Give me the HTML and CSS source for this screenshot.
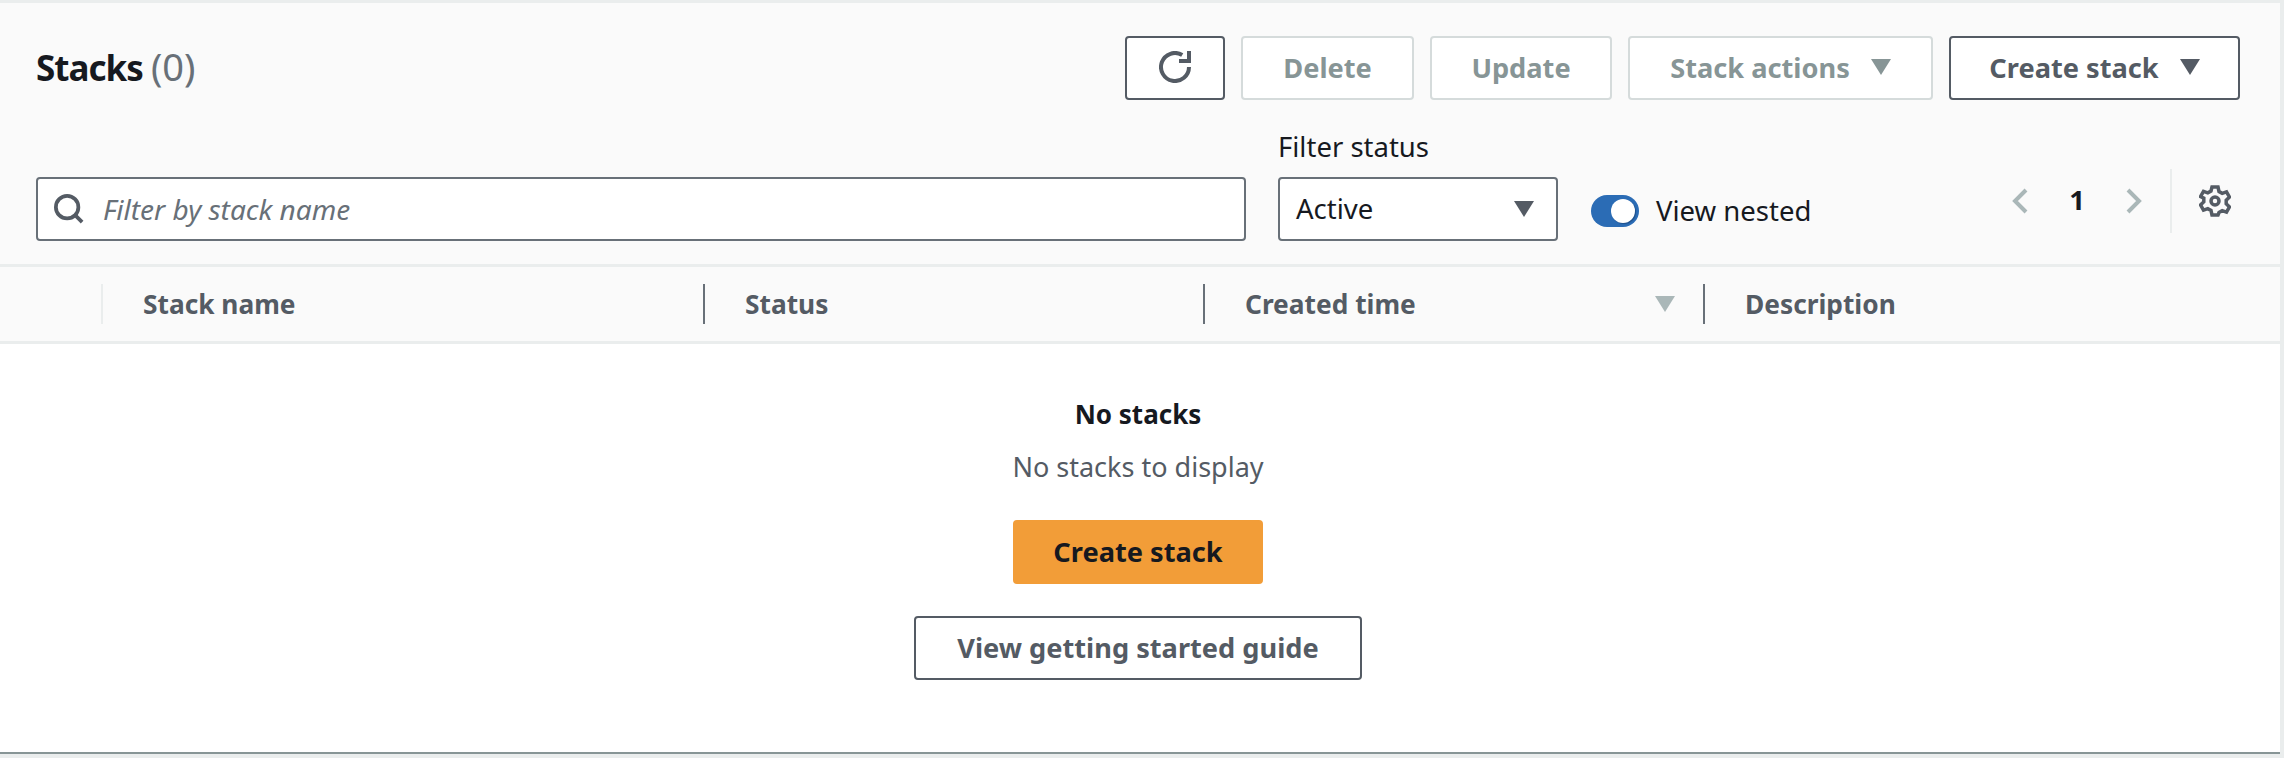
FILE: index.html
```html
<!DOCTYPE html>
<html lang="en">
<head>
    <meta charset="UTF-8">
    <title>Stacks</title>
    <link rel="stylesheet" href="styles.css">
</head>
<body>

    <div class="panel">
        <div class="panel-header">
            <div class="title-row">
                <h2 class="title">Stacks <span class="count">(0)</span></h2>
                <div class="actions">
                    <button class="btn btn-icon" aria-label="Refresh">
                        <svg class="icon" viewBox="0 0 16 16"><path d="M15 8a7 7 0 1 1-3.38-5.99"/><path d="M10 5h5V0"/></svg>
                    </button>
                    <button class="btn btn-disabled btn-delete">Delete</button>
                    <button class="btn btn-disabled btn-update">Update</button>
                    <button class="btn btn-disabled btn-menu btn-stack-actions">Stack actions <span class="caret caret-muted"></span></button>
                    <button class="btn btn-menu btn-create">Create stack <span class="caret"></span></button>
                </div>
            </div>

            <div class="filter-row">
                <div class="search">
                    <svg class="icon search-icon" viewBox="0 0 16 16"><circle cx="7" cy="7" r="6"/><path d="M11 11l4 4"/></svg>
                    <span class="placeholder">Filter by stack name</span>
                </div>
                <div class="status-filter">
                    <label class="filter-label">Filter status</label>
                    <div class="select"><span class="select-value">Active</span> <span class="caret"></span></div>
                </div>
                <div class="toggle-wrap">
                    <span class="toggle"><span class="toggle-thumb"></span></span>
                    <span class="toggle-label">View nested</span>
                </div>
                <div class="pager">
                    <svg class="chevron" viewBox="0 0 16 26"><path d="M14 2L3 13l11 11"/></svg>
                    <span class="page-num">1</span>
                    <svg class="chevron" viewBox="0 0 16 26"><path d="M2 2l11 11L2 24"/></svg>
                    <span class="pager-divider"></span>
                    <svg class="icon gear" viewBox="0 0 32 32"><path d="M13 2h6l1 4.5 3.2 1.800 4.300-1.400 3 5.200-3.300 3.100v3.600l3.300 3.100-3 5.200-4.300-1.400-3.200 1.800L19 30h-6l-1-4.500-3.200-1.800-4.300 1.400-3-5.200 3.300-3.100v-3.600L1.500 11.600l3-5.200 4.300 1.400L12 6z"/><circle cx="16" cy="16" r="4"/></svg>
                </div>
            </div>
        </div>

        <div class="table-head">
            <div class="th th-select"></div>
            <div class="th th-first">Stack name</div>
            <div class="th">Status</div>
            <div class="th th-sorted">Created time <span class="caret caret-sort"></span></div>
            <div class="th">Description</div>
        </div>

        <div class="empty">
            <div class="empty-title">No stacks</div>
            <div class="empty-text">No stacks to display</div>
            <button class="btn btn-primary">Create stack</button>
            <button class="btn btn-guide">View getting started guide</button>
        </div>
    </div>

</body>
</html>
```

FILE: styles.css
```css
* {
    box-sizing: border-box;
}

html, body {
    height: 100%;
}

body {
    margin: 0;
    background-color: #eaeded;
    font-family: "Noto Sans", Arial, sans-serif;
    font-size: 27.5px;
    color: #16191f;
    overflow: hidden;
}

.panel {
    margin-top: 3px;
    width: 2280px;
    height: 751px;
    background-color: #ffffff;
    border-bottom: 2px solid #879596;
    display: flex;
    flex-direction: column;
}

.panel-header {
    height: 264px;
    padding: 33px 40px 0 36px;
    background-color: #fafafa;
    border-bottom: 3px solid #eaeded;
}

.title-row {
    display: flex;
    justify-content: space-between;
    align-items: center;
}

.title {
    margin: 0;
    font-size: 35px;
    font-weight: 700;
    line-height: 60px;
    letter-spacing: -1px;
    align-self: flex-start;
}

.count {
    font-size: 38px;
    font-weight: 400;
    letter-spacing: 0;
    color: #687078;
}

.actions {
    display: flex;
    gap: 16px;
}

.btn {
    height: 64px;
    padding: 0 0 2px;
    background-color: #ffffff;
    border: 2px solid #545b64;
    border-radius: 4px;
    font-family: inherit;
    font-size: 27.2px;
    font-weight: 700;
    color: #545b64;
    display: flex;
    align-items: center;
    justify-content: center;
}

.btn-icon {
    width: 100px;
}

.btn-disabled {
    border-color: #d5dbdb;
    color: #879596;
}

.btn-delete {
    width: 173px;
}

.btn-update {
    width: 182px;
}

.btn-stack-actions {
    width: 305px;
}

.btn-create {
    width: 291px;
}

.btn-menu {
    gap: 21px;
}

.caret {
    display: inline-block;
    width: 0;
    height: 0;
    border-left: 10.5px solid transparent;
    border-right: 10.5px solid transparent;
    border-top: 16px solid #545b64;
}

.caret-muted {
    border-top-color: #879596;
}

.caret-sort {
    border-top-color: #aab7b8;
}

.icon {
    fill: none;
    stroke: #545b64;
    stroke-width: 2;
}

.btn-icon .icon {
    width: 32px;
    height: 32px;
}

.filter-row {
    display: flex;
    align-items: flex-end;
    margin-top: 29px;
}

.search {
    width: 1210px;
    height: 64px;
    padding-left: 16px;
    background-color: #ffffff;
    border: 2px solid #687078;
    border-radius: 4px;
    display: flex;
    align-items: center;
    gap: 19px;
}

.search-icon {
    width: 30px;
    height: 30px;
}

.placeholder {
    font-size: 28px;
    font-style: italic;
    color: #687078;
}

.status-filter {
    margin-left: 32px;
    width: 280px;
}

.filter-label {
    display: block;
    margin-bottom: 12px;
    line-height: 36px;
}

.select {
    height: 64px;
    padding: 0 22px 0 16px;
    background-color: #ffffff;
    border: 2px solid #687078;
    border-radius: 4px;
    display: flex;
    align-items: center;
    justify-content: space-between;
}

.select-value {
    margin-bottom: 2px;
}

.toggle-wrap {
    height: 64px;
    margin-left: 33px;
    padding-top: 4px;
    display: flex;
    align-items: center;
    gap: 17px;
}

.toggle {
    width: 48px;
    height: 32px;
    padding: 4px;
    background-color: #2b6cb5;
    border-radius: 16px;
    display: flex;
    justify-content: flex-end;
}

.toggle-thumb {
    width: 24px;
    height: 24px;
    background-color: #ffffff;
    border-radius: 50%;
    box-shadow: 1px 1px 1px #1d4f8a;
}

.toggle-label {
    margin-bottom: 2px;
}

.pager {
    margin-left: auto;
    margin-right: 9px;
    height: 64px;
    margin-bottom: 8px;
    display: flex;
    align-items: center;
}

.chevron {
    width: 16px;
    height: 26px;
    fill: none;
    stroke: #aab7b8;
    stroke-width: 4;
}

.page-num {
    width: 98px;
    margin-bottom: 3px;
    text-align: center;
    font-weight: 700;
}

.pager-divider {
    width: 2px;
    height: 64px;
    margin: 0 27px 0 28px;
    background-color: #eaeded;
}

.gear {
    width: 32px;
    height: 32px;
    stroke-width: 3.5;
}

.table-head {
    height: 77px;
    padding-top: 17px;
    padding-bottom: 18px;
    background-color: #fafafa;
    border-bottom: 3px solid #eaeded;
    display: grid;
    grid-template-columns: 103px 600px 500px 500px 1fr;
    font-size: 26.3px;
    font-weight: 700;
    color: #545b64;
}

.th {
    height: 40px;
    padding: 0 28px 0 40px;
    border-left: 2px solid #687078;
    display: flex;
    align-items: center;
    justify-content: space-between;
}

.th-select {
    border-left: 0;
    border-right: 2px solid #eaeded;
}

.th-first {
    border-left: 0;
}

.empty {
    padding-top: 52px;
    padding-right: 4px;
    display: flex;
    flex-direction: column;
    align-items: center;
}

.empty-title {
    font-size: 26px;
    font-weight: 700;
    line-height: 36px;
}

.empty-text {
    margin-top: 17px;
    font-size: 27px;
    line-height: 36px;
    color: #545b64;
}

.btn-primary {
    width: 250px;
    margin-top: 35px;
    background-color: #f29d38;
    border-color: #f29d38;
    color: #16191f;
}

.btn-guide {
    width: 448px;
    margin-top: 32px;
}
```
